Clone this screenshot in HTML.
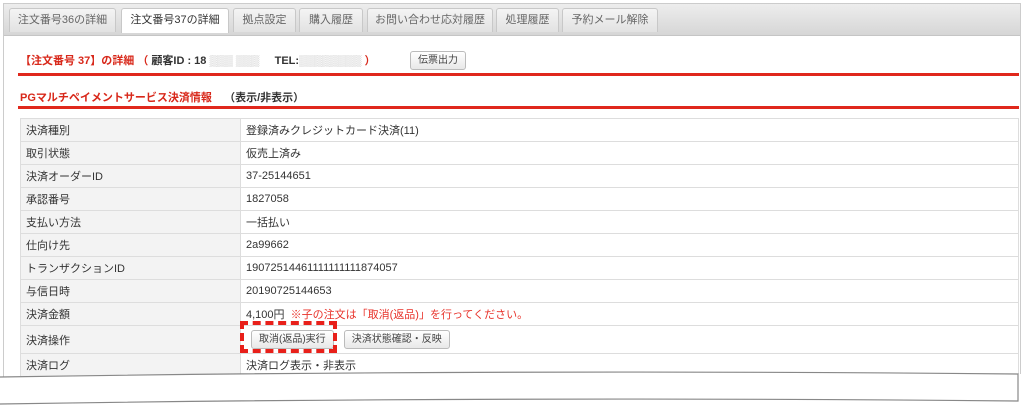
<!DOCTYPE html>
<html><head><meta charset="utf-8"><style>
*{margin:0;padding:0;box-sizing:border-box}
body{width:1024px;height:412px;background:#fff;font-family:"Liberation Sans","Noto Sans CJK JP",sans-serif;font-size:11px;color:#333;position:relative;overflow:hidden}
.a{position:absolute}
.panel{left:3px;top:3px;width:1018px;height:380px;border:1px solid #ccc;border-bottom:none}
.bar{left:4px;top:4px;width:1016px;height:32px;background:linear-gradient(#ededed,#d6d6d6);border-bottom:1px solid #c5c5c5}
.tab{position:absolute;top:8px;height:24px;border:1px solid #c8c8c8;border-bottom:none;background:linear-gradient(#f4f4f4,#e2e2e2);color:#666;font-size:11px;line-height:22px;text-align:center;border-radius:3px 3px 0 0}
.tab.on{background:#fff;height:25px;color:#333}
.red{color:#d8281a;font-weight:bold}
.line{left:18px;width:1001px;height:3px;background:#e0281c}
table{position:absolute;left:20px;top:118px;width:999px;border-collapse:collapse}
td{border:1px solid #ddd;height:23px;padding:0 5px;font-size:11px;color:#333}
td.l{background:#f3f3f3;width:220px}
.btn{display:inline-block;border:1px solid #bbb;border-radius:3px;background:linear-gradient(#fff,#e8e8e8);font-size:10px;color:#444;padding:0 7px;height:19px;line-height:17px}
</style></head><body>
<div class="a panel"></div>
<div class="a bar"></div>
<div class="tab" style="left:9px;width:107px">注文番号36の詳細</div>
<div class="tab on" style="left:121px;width:108px">注文番号37の詳細</div>
<div class="tab" style="left:233px;width:63px">拠点設定</div>
<div class="tab" style="left:299px;width:64px">購入履歴</div>
<div class="tab" style="left:367px;width:126px">お問い合わせ応対履歴</div>
<div class="tab" style="left:496px;width:63px">処理履歴</div>
<div class="tab" style="left:562px;width:96px">予約メール解除</div>
<div class="a red" style="left:20px;top:52px;font-size:11px">【注文番号 37】の詳細 （ <span style="color:#333">顧客ID : 18 <span style="color:#bbb">▒▒▒ ▒▒▒</span> &nbsp; &nbsp; TEL:<span style="color:#bbb">▒▒▒▒▒▒▒▒</span> </span>）</div>
<div class="a btn" style="left:410px;top:51px;height:19px">伝票出力</div>
<div class="a line" style="top:73px"></div>
<div class="a red" style="left:20px;top:89px">PGマルチペイメントサービス決済情報 &nbsp; &nbsp;<span style="color:#333">（表示/非表示）</span></div>
<div class="a line" style="top:106px"></div>
<table>
<tr><td class="l">決済種別</td><td>登録済みクレジットカード決済(11)</td></tr>
<tr><td class="l">取引状態</td><td>仮売上済み</td></tr>
<tr><td class="l">決済オーダーID</td><td>37-25144651</td></tr>
<tr><td class="l">承認番号</td><td>1827058</td></tr>
<tr><td class="l">支払い方法</td><td>一括払い</td></tr>
<tr><td class="l">仕向け先</td><td>2a99662</td></tr>
<tr><td class="l">トランザクションID</td><td>19072514461111111111874057</td></tr>
<tr><td class="l">与信日時</td><td>20190725144653</td></tr>
<tr><td class="l">決済金額</td><td>4,100円 &nbsp;<span style="color:#e8322a">※子の注文は「取消(返品)」を行ってください。</span></td></tr>
<tr><td class="l" style="height:28px">決済操作</td><td style="height:28px"><span class="btn" style="margin-left:5px">取消(返品)実行</span> &nbsp;<span class="btn" style="margin-left:4px">決済状態確認・反映</span></td></tr>
<tr><td class="l">決済ログ</td><td>決済ログ表示・非表示</td></tr>
</table>
<div class="a" style="left:240px;top:321px;width:97px;height:32px;border:4px dashed #e8201a"></div>
<svg class="a" style="left:0;top:360px" width="1024" height="52">
<path d="M0 17 Q500 9 1018 14 L1024 14 L1024 52 L0 52 Z" fill="#fff"/>
<path d="M0 17 Q500 9 1018 14 L1018 41 Q500 36 0 44" fill="none" stroke="#888" stroke-width="1.2"/>
</svg>
</body></html>
